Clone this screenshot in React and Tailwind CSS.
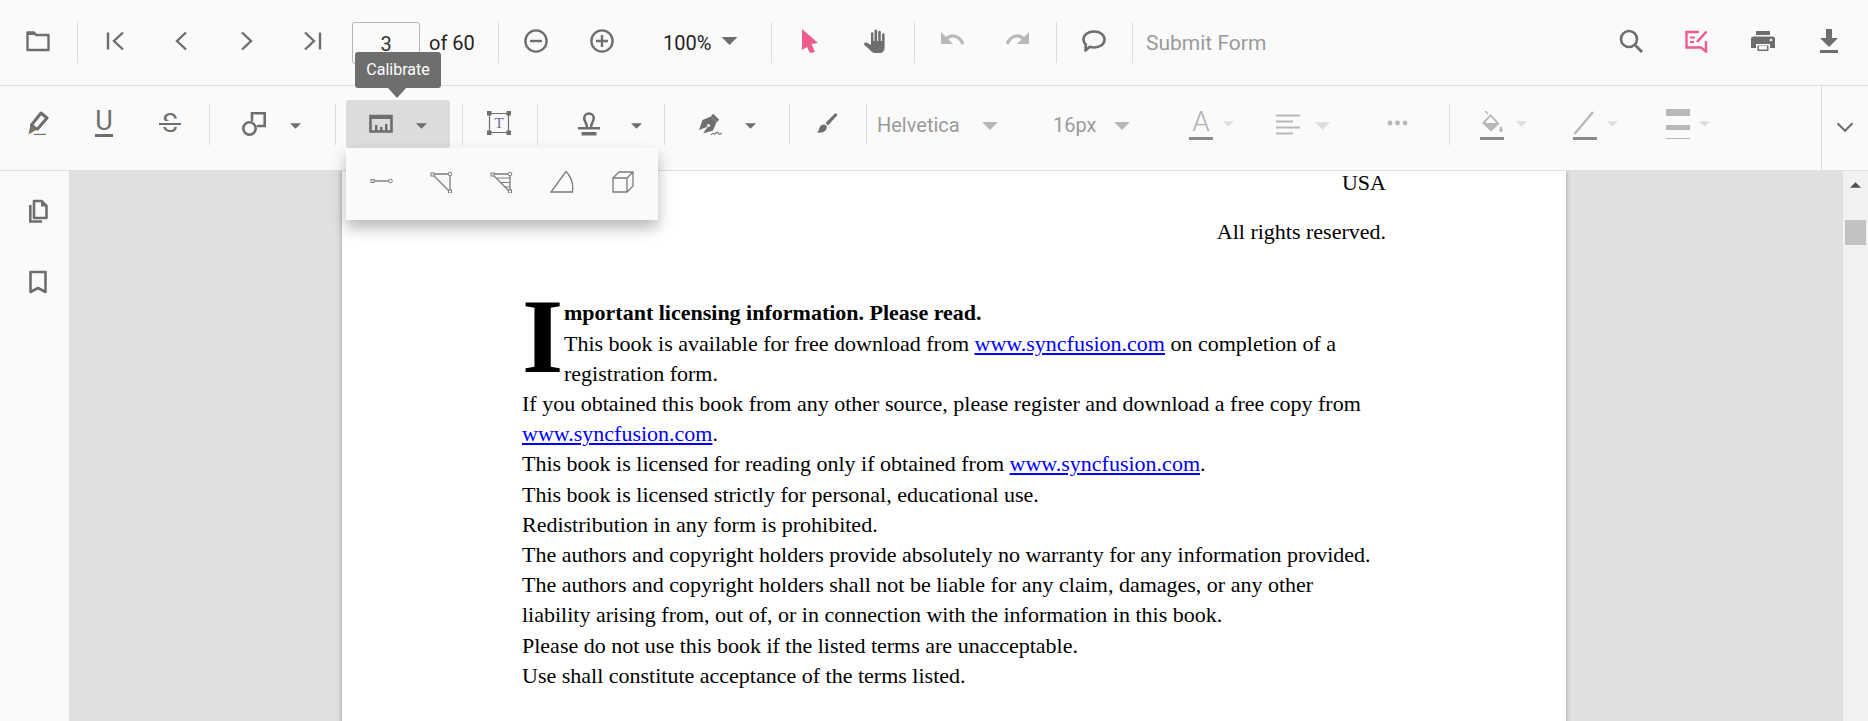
const G = "#6e6e6e";
const D = "#b8b8b8";

function Svg({ children, size = 24, className = "" }) {
  return (
    <svg width={size} height={size} viewBox="0 0 24 24" fill="none" className={`shrink-0 ${className}`}>
      {children}
    </svg>
  );
}

function Sep({ className = "" }) {
  return <div className={`w-px h-[41px] shrink-0 bg-[#dcdcdc] ${className}`} />;
}

function Caret({ w = 11, h = 6, color = G, up = false, className = "" }) {
  return (
    <svg width={w} height={h} viewBox="0 0 10 5" className={`shrink-0 ${className}`}>
      <path d={up ? "M0 5H10L5 0Z" : "M0 0H10L5 5Z"} fill={color} />
    </svg>
  );
}

// fixed width toolbar cell, icon sits a little above the row center
function Btn({ children }) {
  return <div className="w-[66px] shrink-0 flex items-center justify-center pb-[3px]">{children}</div>;
}

const Folder = () => (
  <Svg>
    <path d="M1.5 3.5H8L10 6H22.5V21H1.5Z" stroke={G} strokeWidth="2.4" strokeLinejoin="round" />
    <path d="M1.5 3H8.5L10.5 6H2Z" fill={G} />
  </Svg>
);
const First = () => (
  <Svg>
    <path d="M5 3.5V20.5" stroke={G} strokeWidth="2.4" />
    <path d="M20 3.5L11 12L20 20.5" stroke={G} strokeWidth="2.4" />
  </Svg>
);
const Prev = () => (
  <Svg>
    <path d="M17 3.5L8 12L17 20.5" stroke={G} strokeWidth="2.4" />
  </Svg>
);
const Next = () => (
  <Svg>
    <path d="M7 3.5L16 12L7 20.5" stroke={G} strokeWidth="2.4" />
  </Svg>
);
const Last = () => (
  <Svg>
    <path d="M19 3.5V20.5" stroke={G} strokeWidth="2.4" />
    <path d="M4 3.5L13 12L4 20.5" stroke={G} strokeWidth="2.4" />
  </Svg>
);
const Minus = () => (
  <Svg>
    <circle cx="12" cy="12" r="10.6" stroke={G} strokeWidth="2.4" />
    <path d="M6 12H18" stroke={G} strokeWidth="2.4" />
  </Svg>
);
const Plus = () => (
  <Svg>
    <circle cx="12" cy="12" r="10.6" stroke={G} strokeWidth="2.4" />
    <path d="M6 12H18M12 6V18" stroke={G} strokeWidth="2.4" />
  </Svg>
);
const Cursor = () => (
  <Svg>
    <path d="M5 0L21 14L14.5 15L18 23L13 24L10 18L5 21Z" fill="#ef5a8f" />
  </Svg>
);
const Hand = () => (
  <Svg>
    <path
      d="M8 4.5a1.2 1.2 0 0 1 2.4 0V12H11.5V1.8a1.3 1.3 0 0 1 2.6 0V12H15.2V3a1.3 1.3 0 0 1 2.6 0V12H19V5.5a1.3 1.3 0 0 1 2.6 0V18.5C21.6 22 19.5 24 16.5 24H12C10 24 9 23 7.5 21.5L1 15.5C0.6 14.2 2.3 13 3.8 13.8L8 16Z"
      fill={G}
    />
  </Svg>
);
const Undo = () => (
  <Svg>
    <path d="M1 3V15H13Z" fill={D} />
    <path d="M6 10C11 5 19 6 23 15" stroke={D} strokeWidth="3.2" />
  </Svg>
);
const Redo = () => (
  <Svg>
    <path d="M23 3V15H11Z" fill={D} />
    <path d="M18 10C13 5 5 6 1 15" stroke={D} strokeWidth="3.2" />
  </Svg>
);
const Comment = () => (
  <Svg>
    <path
      d="M12 2.5C18 2.5 22.5 5.8 22.5 10.5S18 18.5 12 18.5C10.5 18.5 9 18.2 7.8 17.8L3.5 21.5L3.8 15.5C2.3 14 1.5 12.3 1.5 10.5C1.5 5.8 6 2.5 12 2.5Z"
      stroke={G}
      strokeWidth="2.6"
      strokeLinejoin="round"
    />
  </Svg>
);
const Search = () => (
  <Svg>
    <circle cx="10" cy="10" r="8" stroke={G} strokeWidth="2.6" />
    <path d="M15.5 15.5L23 23" stroke={G} strokeWidth="2.8" />
  </Svg>
);
const EditAnnot = () => (
  <Svg>
    <path d="M14 3H1.5V18.5H16L21 22.5V12" stroke="#ef5a8f" strokeWidth="2.4" />
    <path d="M5 8.5H10M5 13H9" stroke="#ef5a8f" strokeWidth="2" />
    <path d="M12 13L21.5 2.5" stroke="#ef5a8f" strokeWidth="2.6" />
  </Svg>
);
const Print = () => (
  <Svg>
    <path d="M5 2H19V6H5Z" fill={G} />
    <path d="M3 7.5H21A2.5 2.5 0 0 1 24 10V19H19V15H5V19H0V10A2.5 2.5 0 0 1 3 7.5Z" fill={G} />
    <path d="M6.5 16.5H17.5V22H6.5Z" fill={G} />
    <path d="M8 17H16V20.5H8Z" fill="#fafafa" />
    <circle cx="20" cy="11" r="1.3" fill="#fafafa" />
  </Svg>
);
const Download = () => (
  <Svg>
    <path d="M9 0H15V9H21L12 18L3 9H9Z" fill={G} />
    <path d="M3 21H21V24H3Z" fill={G} />
  </Svg>
);

const Highlight = () => (
  <Svg>
    <path d="M9.5 17.5L5.5 14L15 2L21 7L11.5 18Z" stroke={G} strokeWidth="3" strokeLinejoin="round" />
    <path d="M4.5 13.5L10 19L2.5 23.5Z" fill="#7d7264" />
    <path d="M8 23.5H20" stroke={G} strokeWidth="1.3" />
  </Svg>
);
const Underline = () => (
  <div className="w-[24px] h-[28px] flex flex-col items-center justify-end">
    <span className="text-[27px] leading-[24px] text-[#6e6e6e]">U</span>
    <div className="w-[18px] h-[3px] mt-[1px] bg-[#6e6e6e]" />
  </div>
);
const Strike = () => (
  <div className="relative w-[24px] h-[26px] flex items-center justify-center">
    <span className="text-[26px] leading-[26px] text-[#6e6e6e]">S</span>
    <div className="absolute left-[1px] right-[1px] top-[11px] h-[2px] bg-[#6e6e6e] border-y-[2px] border-[#fafafa] box-content" />
  </div>
);
const Shape = () => (
  <Svg>
    <path d="M10 9V1.3H22.7V14H15" stroke={G} strokeWidth="2.6" />
    <circle cx="7.5" cy="16.5" r="6.2" stroke={G} strokeWidth="2.6" />
  </Svg>
);
const Ruler = () => (
  <Svg>
    <path d="M1.5 4H22.5V19.5H1.5Z" stroke={G} strokeWidth="2.6" />
    <path d="M1 4H23V7H1Z" fill={G} />
    <path d="M6 13V19H8.5V13ZM11 15V19H13.5V15ZM16 12V19H18.5V12Z" fill={G} />
  </Svg>
);
const FreeText = () => (
  <Svg size={24}>
    <path d="M2.5 2.5H21.5V21.5H2.5Z" stroke={G} strokeWidth="1.2" />
    <path d="M0 0H4.5V4.5H0ZM19.5 0H24V4.5H19.5ZM0 19.5H4.5V24H0ZM19.5 19.5H24V24H19.5Z" fill={G} />
    <text x="12" y="17" textAnchor="middle" fontSize="15" fontFamily="Liberation Serif, serif" fill="#6d6d9a">T</text>
  </Svg>
);
const Stamp = () => (
  <Svg>
    <path
      d="M9.8 15C10.2 11.5 7.2 9.5 7.2 6.3A4.8 4.8 0 0 1 16.8 6.3C16.8 9.5 13.8 11.5 14.2 15"
      stroke={G}
      strokeWidth="2.6"
    />
    <path d="M1 15H23V17.5H1Z" fill={G} />
    <path d="M4.5 20H19.5V23.5H4.5Z" fill={G} />
  </Svg>
);
const Pen = () => (
  <Svg>
    <path d="M1 18L4.5 8L13 4.5L18.5 10L15 18.5L5 21.5L10 14.5" fill={G} />
    <path d="M14 3L20 9" stroke={G} strokeWidth="3.4" />
    <circle cx="10.5" cy="13.5" r="1.6" fill="#fafafa" />
    <path d="M13 23C15 19.5 16 23 17.5 21.5S20 20 20.5 21.5 23 22 23.5 21" stroke={G} strokeWidth="1.1" />
  </Svg>
);
const Brush = () => (
  <Svg>
    <path d="M10.5 12L20 2.5C21 1.7 23 3.3 22 4.5L13 14.5Z" fill={G} />
    <path d="M8.5 13.5C11 13.5 12.5 15.5 11.5 18C10.5 21 6 22.5 2 21.5C4.5 20.5 3.5 14 8.5 13.5Z" fill={G} />
  </Svg>
);
const FontColor = () => (
  <div className="w-[24px] h-[32px] flex flex-col items-center justify-end">
    <span className="text-[28px] leading-[26px] font-light text-[#b0b0b0]">A</span>
    <div className="w-[24px] h-[3px] mt-[2px] bg-[#8a8a8a]" />
  </div>
);
const Align = () => (
  <Svg>
    <path d="M0 3.5H24M0 9.5H17M0 15.5H24M0 21.5H17" stroke={D} strokeWidth="2.2" />
  </Svg>
);
const Dots = () => (
  <Svg>
    <circle cx="5" cy="12" r="2.4" fill={D} />
    <circle cx="12.5" cy="12" r="2.4" fill={D} />
    <circle cx="20" cy="12" r="2.4" fill={D} />
  </Svg>
);
const Fill = () => (
  <div className="w-[24px] h-[32px] flex flex-col items-center justify-end">
    <Svg size={24}>
      <path d="M5 0L8 3" stroke={D} strokeWidth="1.6" />
      <path d="M10.5 3L19.5 12.5L11 20.5L2 12Z" fill={D} />
      <path d="M10.5 5.5L16.5 12H5Z" fill="#fafafa" />
      <path d="M21 15C22 17 22.8 18 22.8 19.2A1.8 1.8 0 0 1 19.2 19.2C19.2 18 20 17 21 15Z" fill={D} />
    </Svg>
    <div className="w-[24px] h-[3px] mt-[2px] bg-[#8a8a8a]" />
  </div>
);
const LineColor = () => (
  <div className="w-[24px] h-[32px] flex flex-col items-center justify-end">
    <Svg size={24}>
      <path d="M1.5 23L20 1" stroke={D} strokeWidth="2.4" />
    </Svg>
    <div className="w-[24px] h-[3px] mt-[2px] bg-[#8a8a8a]" />
  </div>
);
const Thickness = () => (
  <div className="w-[24px] h-[30px] flex flex-col justify-between">
    <div className="h-[7px] bg-[#b8b8b8]" />
    <div className="h-[5px] bg-[#b8b8b8]" />
    <div className="h-px bg-[#b8b8b8]" />
  </div>
);

function Split({ icon, className, active }) {
  return (
    <div className={`flex items-center shrink-0 h-[48px] rounded-[3px] ${active ? "bg-[#dcdcdc]" : ""} ${className}`}>
      {icon}
      <Caret className="mt-[3px]" />
    </div>
  );
}

const Chevron = () => (
  <Svg size={20}>
    <path d="M3 7.5L12 16.5L21 7.5" stroke={G} strokeWidth="2.6" />
  </Svg>
);

const Distance = () => (
  <Svg>
    <path d="M3.5 12H20" stroke="#7c7c7c" strokeWidth="1.4" />
    <rect x="1" y="10.5" width="3" height="3" fill="#fafafa" stroke="#7c7c7c" />
    <circle cx="20.5" cy="12" r="1.8" fill="#fafafa" stroke="#7c7c7c" />
  </Svg>
);
const Perimeter = () => (
  <Svg>
    <path d="M2 5H20V23Z" stroke="#7c7c7c" strokeWidth="1.3" />
    <rect x="1" y="4" width="3" height="3" fill="#fafafa" stroke="#7c7c7c" />
    <circle cx="20" cy="5" r="1.8" fill="#fafafa" stroke="#7c7c7c" />
    <rect x="18.5" y="21" width="3" height="3" fill="#fafafa" stroke="#7c7c7c" />
  </Svg>
);
const Area = () => (
  <Svg>
    <path d="M2 5H20V23Z" stroke="#7c7c7c" strokeWidth="1.3" />
    <path d="M6 9H20M10 13.5H20M14 18H20" stroke="#7c7c7c" strokeWidth="1.1" />
    <rect x="1" y="4" width="3" height="3" fill="#fafafa" stroke="#7c7c7c" />
    <circle cx="20" cy="5" r="1.8" fill="#fafafa" stroke="#7c7c7c" />
    <rect x="18.5" y="21" width="3" height="3" fill="#fafafa" stroke="#7c7c7c" />
  </Svg>
);
const Radius = () => (
  <Svg>
    <path d="M16 2.5L1 23H22.5C23.5 15 21 7.5 16 2.5Z" stroke="#7c7c7c" strokeWidth="1.3" />
  </Svg>
);
const Volume = () => (
  <Svg>
    <path d="M3 9H17V23H3ZM3 9L9 3H23V17L17 23M17 9L23 3" stroke="#7c7c7c" strokeWidth="1.3" />
  </Svg>
);

const Link = () => <a className="text-[#0000ff] underline">www.syncfusion.com</a>;

export default function App() {
  return (
    <div className="relative h-[721px] w-[1868px] overflow-hidden flex flex-col bg-[#fafafa] font-['Roboto',sans-serif]">
      {/* Main toolbar */}
      <div className="h-[86px] shrink-0 flex items-center border-b border-[#e0e0e0] pl-[5px] pr-[6px]">
        <Btn><Folder /></Btn>
        <Sep className="ml-[6px] mr-[4px]" />
        <Btn><First /></Btn>
        <Btn><Prev /></Btn>
        <Btn><Next /></Btn>
        <Btn><Last /></Btn>
        <div className="ml-[6px] w-[68px] h-[42px] shrink-0 border border-[#b5b5b5] rounded-[3px] flex items-center justify-center pt-[3px] text-[20px] text-[#333]">
          3
        </div>
        <span className="ml-[9px] w-[69px] shrink-0 text-[20px] text-[#222]">of 60</span>
        <Sep className="mr-[4px]" />
        <Btn><Minus /></Btn>
        <Btn><Plus /></Btn>
        <span className="ml-[28px] w-[58px] shrink-0 text-[20px] text-[#222]">100%</span>
        <Caret w={17} h={8} className="mb-[3px]" />
        <Sep className="ml-[33px] mr-[4px]" />
        <Btn><Cursor /></Btn>
        <Btn><Hand /></Btn>
        <Sep className="ml-[6px] mr-[4px]" />
        <Btn><Undo /></Btn>
        <Btn><Redo /></Btn>
        <Sep className="ml-[5px] mr-[4px]" />
        <Btn><Comment /></Btn>
        <Sep className="ml-[5px]" />
        <span className="ml-[13px] pt-[2px] text-[21px] text-[#9a9a9a]">Submit Form</span>
        <div className="ml-auto flex">
          <Btn><Search /></Btn>
          <Btn><EditAnnot /></Btn>
          <Btn><Print /></Btn>
          <Btn><Download /></Btn>
        </div>
      </div>

      {/* Annotation toolbar */}
      <div className="h-[85px] shrink-0 flex items-start border-b border-[#e0e0e0] pl-[5px]">
        <div className="flex items-center h-[84px] pb-[8px]">
          <Btn><Highlight /></Btn>
          <Btn><Underline /></Btn>
          <Btn><Strike /></Btn>
          <Sep className="ml-[6px]" />
          <Split icon={<Shape />} className="ml-[32px] gap-[24px]" />
          <Sep className="ml-[34px]" />
          <Split icon={<Ruler />} active className="ml-[10px] w-[104px] pl-[23px] gap-[23px]" />
          <Sep className="ml-[12px] mr-[3px]" />
          <Btn><FreeText /></Btn>
          <Sep className="ml-[5px]" />
          <Split icon={<Stamp />} className="ml-[39px] gap-[30px]" />
          <Sep className="ml-[22px]" />
          <Split icon={<Pen />} className="ml-[33px] gap-[23px]" />
          <Sep className="ml-[33px] mr-[4px]" />
          <Btn><Brush /></Btn>
          <Sep className="ml-[6px]" />
          <span className="ml-[10px] w-[105px] shrink-0 pt-[2px] text-[20px] text-[#9a9a9a]">Helvetica</span>
          <Caret w={16} h={8} color={D} className="mt-[3px]" />
          <span className="ml-[55px] w-[61px] shrink-0 pt-[2px] text-[20px] text-[#9a9a9a]">16px</span>
          <Caret w={16} h={8} color={D} className="mt-[3px]" />
          <div className="ml-[59px]"><FontColor /></div>
          <Caret color="#dcdcdc" className="ml-[10px]" />
          <div className="ml-[42px]"><Align /></div>
          <Caret w={15} h={8} color="#dcdcdc" className="ml-[15px] mt-[3px]" />
          <div className="ml-[55px] pb-[3px]"><Dots /></div>
          <Sep className="ml-[40px]" />
          <div className="ml-[30px]"><Fill /></div>
          <Caret color="#dcdcdc" className="ml-[12px]" />
          <div className="ml-[46px]"><LineColor /></div>
          <Caret color="#dcdcdc" className="ml-[10px]" />
          <div className="ml-[48px]"><Thickness /></div>
          <Caret color="#dcdcdc" className="ml-[9px]" />
        </div>
        <div className="ml-auto w-[47px] h-[84px] border-l border-[#dcdcdc] flex items-center justify-center pb-[2px]">
          <Chevron />
        </div>
      </div>

      {/* Body */}
      <div className="flex-1 min-h-0 flex">
        <div className="w-[69px] shrink-0 flex flex-col items-center pt-[28px] gap-[47px] pl-[7px]">
          <Svg>
            <path d="M8 2H15.5L20.5 7V19H8Z" stroke={G} strokeWidth="2.6" strokeLinejoin="round" />
            <path d="M15 1.5V7.5H21Z" fill={G} />
            <path d="M4.3 6V22.5H16" stroke={G} strokeWidth="2.6" />
          </Svg>
          <Svg>
            <path d="M4.5 2H19.5V22L12 18L4.5 22Z" stroke={G} strokeWidth="2.6" strokeLinejoin="round" />
          </Svg>
        </div>

        <div className="flex-1 bg-[#e0e0e0] overflow-hidden">
          <div className="flow-root ml-[273px] w-[1224px] h-[600px] bg-white shadow-[0_0_5px_rgba(0,0,0,0.3)] px-[180px] text-[22px] leading-[30.2px] text-black font-['Liberation_Serif',serif]">
            <div className="-mt-[3px] text-right">USA</div>
            <div className="mt-[19px] text-right">All rights reserved.</div>
            <div className="mt-[51px]">
              <div className="float-left w-[42px] h-[90px] text-[106px] leading-[78px] font-bold">I</div>
              <div className="font-bold">mportant licensing information. Please read.</div>
              <div>
                This book is available for free download from <Link /> on completion of a registration form.
              </div>
              <div>If you obtained this book from any other source, please register and download a free copy from</div>
              <div>
                <Link />.
              </div>
              <div>
                This book is licensed for reading only if obtained from <Link />.
              </div>
              <div>This book is licensed strictly for personal, educational use.</div>
              <div>Redistribution in any form is prohibited.</div>
              <div>The authors and copyright holders provide absolutely no warranty for any information provided.</div>
              <div>The authors and copyright holders shall not be liable for any claim, damages, or any other</div>
              <div>liability arising from, out of, or in connection with the information in this book.</div>
              <div>Please do not use this book if the listed terms are unacceptable.</div>
              <div>Use shall constitute acceptance of the terms listed.</div>
            </div>
          </div>
        </div>

        <div className="w-[25px] shrink-0 bg-[#f1f1f1] flex flex-col items-center pt-[11px]">
          <Caret w={11} h={6} color="#505050" up />
          <div className="mt-[32px] w-[21px] h-[25px] bg-[#c1c1c1]" />
        </div>
      </div>

      {/* Calibrate tooltip */}
      <div className="absolute left-[355px] top-[52px] w-[86px] h-[36px] rounded-[3px] bg-[#6e6e6e] text-white text-[16px] flex items-center justify-center">
        Calibrate
        <div className="absolute left-[33px] top-[36px] border-x-[9px] border-x-transparent border-t-[10px] border-t-[#6e6e6e]" />
      </div>

      {/* Calibrate dropdown */}
      <div className="absolute left-[346px] top-[148px] w-[312px] h-[72px] bg-[#fafafa] shadow-[0_8px_14px_rgba(0,0,0,0.28)] flex items-center pl-[24px] pb-[6px] gap-[36px]">
        <Distance />
        <Perimeter />
        <Area />
        <Radius />
        <Volume />
      </div>
    </div>
  );
}
